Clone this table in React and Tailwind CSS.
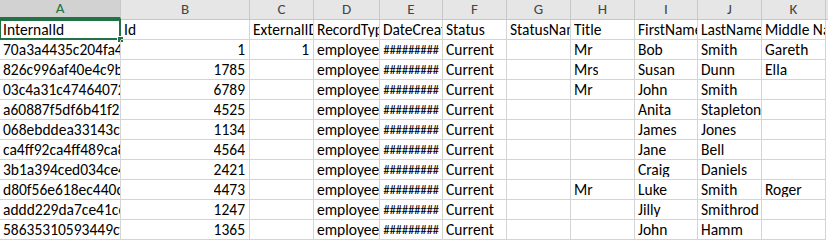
const cols = [
  { key: "A", w: "w-[121px]" },
  { key: "B", w: "w-[129px]" },
  { key: "C", w: "w-[64px]" },
  { key: "D", w: "w-[66px]" },
  { key: "E", w: "w-[63px]" },
  { key: "F", w: "w-[64px]" },
  { key: "G", w: "w-[64px]" },
  { key: "H", w: "w-[64px]" },
  { key: "I", w: "w-[63px]" },
  { key: "J", w: "w-[64px]" },
  { key: "K", w: "w-[64px]" },
];

const HASH = "#########";

const rows = [
  ["InternalId", "Id", "ExternalID", "RecordType", "DateCreated", "Status", "StatusName", "Title", "FirstName", "LastName", "Middle Name"],
  ["70a3a4435c204fa4a1", 1, 1, "employee", HASH, "Current", "", "Mr", "Bob", "Smith", "Gareth"],
  ["826c996af40e4c9b90", 1785, "", "employee", HASH, "Current", "", "Mrs", "Susan", "Dunn", "Ella"],
  ["03c4a31c474640729a", 6789, "", "employee", HASH, "Current", "", "Mr", "John", "Smith", ""],
  ["a60887f5df6b41f28b", 4525, "", "employee", HASH, "Current", "", "", "Anita", "Stapleton", ""],
  ["068ebddea33143c7a", 1134, "", "employee", HASH, "Current", "", "", "James", "Jones", ""],
  ["ca4ff92ca4ff489ca8b", 4564, "", "employee", HASH, "Current", "", "", "Jane", "Bell", ""],
  ["3b1a394ced034ce48a", 2421, "", "employee", HASH, "Current", "", "", "Craig", "Daniels", ""],
  ["d80f56e618ec440c8b", 4473, "", "employee", HASH, "Current", "", "Mr", "Luke", "Smith", "Roger"],
  ["addd229da7ce41ce4a", 1247, "", "employee", HASH, "Current", "", "", "Jilly", "Smithrod", ""],
  ["58635310593449cfb1", 1365, "", "employee", HASH, "Current", "", "", "John", "Hamm", ""],
];

const App = () => {
  return (
    <div className="w-[828px] h-[240px] overflow-hidden bg-white text-black font-['Carlito','Lato',sans-serif] text-[15.5px] leading-none">
      {/* Column headers */}
      <div className="flex h-[20px] bg-[#e6e6e6] border-b border-[#c6c6c6]">
        {cols.map((c, i) => (
          <div
            key={c.key}
            className={`${c.w} shrink-0 flex items-center justify-center border-r border-[#c8c8c8] text-[15px] ${
              i === 0 ? "bg-[#d2d2d2] text-[#217346] border-b-2 border-b-[#217346]" : "text-[#444]"
            }`}
          >
            {c.key}
          </div>
        ))}
      </div>

      {/* Rows */}
      {rows.map((row, r) => (
        <div key={r} className="flex h-[20px]">
          {row.map((val, ci) => {
            const isNum = typeof val === "number";
            const isHash = val === HASH;
            const selected = r === 0 && ci === 0;
            return (
              <div
                key={ci}
                className={`${cols[ci].w} shrink-0 relative flex items-center whitespace-nowrap border-r border-b border-[#d4d4d4] ${
                  isNum ? "justify-end pr-[4px]" : isHash ? "justify-center" : "pl-[3px]"
                } ${selected ? "" : "overflow-hidden"}`}
              >
                <span className={isHash ? "text-[13px] tracking-[-0.3px]" : "block overflow-hidden"}>{val}</span>
                {selected && (
                  <>
                    <div className="absolute -left-px -top-px right-[-1px] bottom-[-1px] border-2 border-[#217346]" />
                    <div className="absolute right-[-4px] bottom-[-4px] w-[7px] h-[7px] bg-[#217346] border border-white" />
                  </>
                )}
              </div>
            );
          })}
        </div>
      ))}
    </div>
  );
};

export default App;
